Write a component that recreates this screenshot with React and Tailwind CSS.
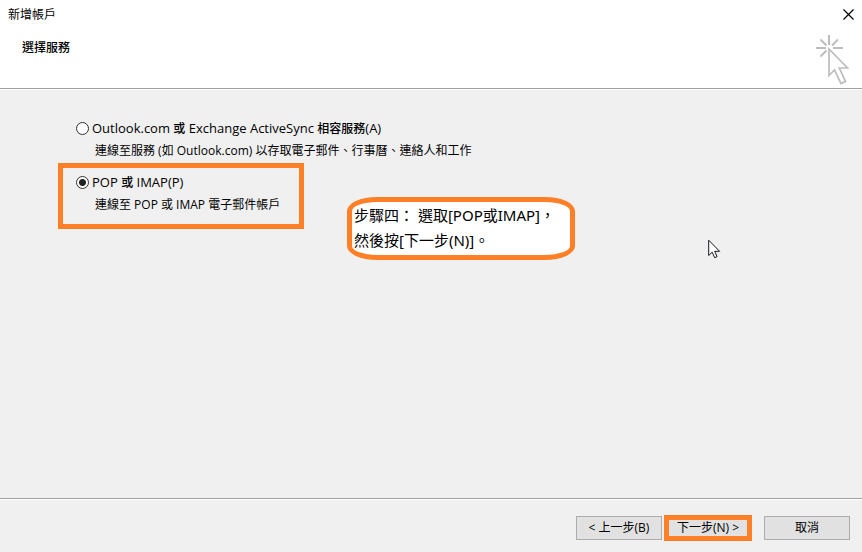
import React from "react";

function ClickCursorIcon() {
  return (
    <svg width="34" height="50" viewBox="0 0 34 50" fill="none" stroke="#bdbdbd" strokeWidth="2" aria-hidden="true">
      <path d="M13 0v10M0 13h10M17 13h10M4.500 4.500l6 6M22 4.500l-6 6M4.500 21.500l6-6" />
      <path
        fill="#ffffff"
        strokeWidth="1.700"
        d="M13 14v26.500l5.500-5.500 6.500 13.500 4.500-2.200-6.200-13.300h8.200z"
      />
    </svg>
  );
}

function PointerIcon() {
  return (
    <svg width="13" height="20" viewBox="0 0 13 20" aria-hidden="true">
      <path
        d="M.7 1.200v15.300l3.500-3.300 2.500 5.500 2.400-1.100-2.400-5.300h4.900z"
        fill="#ffffff"
        stroke="#151520"
        strokeWidth="1"
      />
    </svg>
  );
}

function Han({ children }) {
  return <span className="text-[12px]">{children}</span>;
}

function Option({ id, title, description, defaultChecked }) {
  return (
    <div>
      <div className="flex h-[22px] items-center gap-[3px]">
        <input
          type="radio"
          name="service"
          id={id}
          defaultChecked={defaultChecked}
          aria-describedby={id + "-description"}
          className="size-[13px] shrink-0 appearance-none rounded-full border border-[#333333] bg-white bg-clip-padding checked:bg-[radial-gradient(circle,#222222_3px,#ffffff_4px)]"
        />
        <label htmlFor={id} className="text-[13px] font-medium">
          {title}
        </label>
      </div>
      <p id={id + "-description"} className="mt-px h-[22px] pl-[19px] leading-[22px]">
        {description}
      </p>
    </div>
  );
}

function DialogButton({ children }) {
  return (
    <button type="button" className="h-6 w-[86px] border border-[#adadad] bg-[#e1e1e1] leading-[22px]">
      {children}
    </button>
  );
}

export default function App() {
  return (
    <div
      lang="zh-TW"
      className="relative flex min-h-screen flex-col bg-[#f0f0f0] font-['Open_Sans','Noto_Sans_CJK_TC',sans-serif] text-[12px] leading-[18px] whitespace-nowrap text-black"
    >
      <header className="flex h-[89px] justify-between border-b border-[#a0a0a0] bg-white">
        <div className="pt-[6px] pl-2">
          <p>新增帳戶</p>
          <h1 className="mt-[15px] pl-[14px] font-medium">選擇服務</h1>
        </div>
        <div className="flex flex-col items-end pt-[9px] pr-2">
          <button type="button" aria-label="關閉" className="size-[11px]">
            <svg width="11" height="11" viewBox="0 0 11 11" stroke="#000000" strokeWidth="1.200">
              <path d="M.5.5l10 10M10.500.5l-10 10" />
            </svg>
          </button>
          <div className="mt-[15px] pr-1">
            <ClickCursorIcon />
          </div>
        </div>
      </header>

      <main className="grow border-t border-white pt-[27px] pl-[58px]">
        <div className="pl-[18px]">
          <Option
            id="exchange"
            title={
              <>
                Outlook.com <Han>或</Han> Exchange ActiveSync <Han>相容服務</Han>(A)
              </>
            }
            description="連線至服務 (如 Outlook.com) 以存取電子郵件、行事曆、連絡人和工作"
          />
        </div>
        <div className="mt-px h-[66px] w-[246px] border-5 border-[#ff7f27] pt-[3px] pl-[13px]">
          <Option
            id="pop"
            title={
              <>
                POP <Han>或</Han> IMAP(P)
              </>
            }
            description="連線至 POP 或 IMAP 電子郵件帳戶"
            defaultChecked
          />
        </div>
      </main>

      <footer className="border-t border-[#a0a0a0]">
        <div className="flex h-[53px] items-start justify-end border-t border-white pt-4 pr-3">
          <DialogButton>&lt; 上一步(B)</DialogButton>
          <div className="relative mr-[13px] ml-[3px]">
            <DialogButton>下一步(N) &gt;</DialogButton>
            <span className="pointer-events-none absolute -inset-px border-5 border-[#ff7f27]" />
          </div>
          <DialogButton>取消</DialogButton>
        </div>
      </footer>

      <aside className="absolute top-[197px] left-[347px] h-[63px] w-[228px] rounded-[30px/14px] border-5 border-[#ff7f27] bg-white pt-px pl-[2px] font-['Noto_Sans','Noto_Sans_CJK_TC',sans-serif] text-[15px] leading-[25px]">
        <p>步驟四： 選取[POP或IMAP]，</p>
        <p>然後按[下一步(N)]。</p>
      </aside>

      <div className="pointer-events-none absolute top-[239px] left-[708px]">
        <PointerIcon />
      </div>
    </div>
  );
}
